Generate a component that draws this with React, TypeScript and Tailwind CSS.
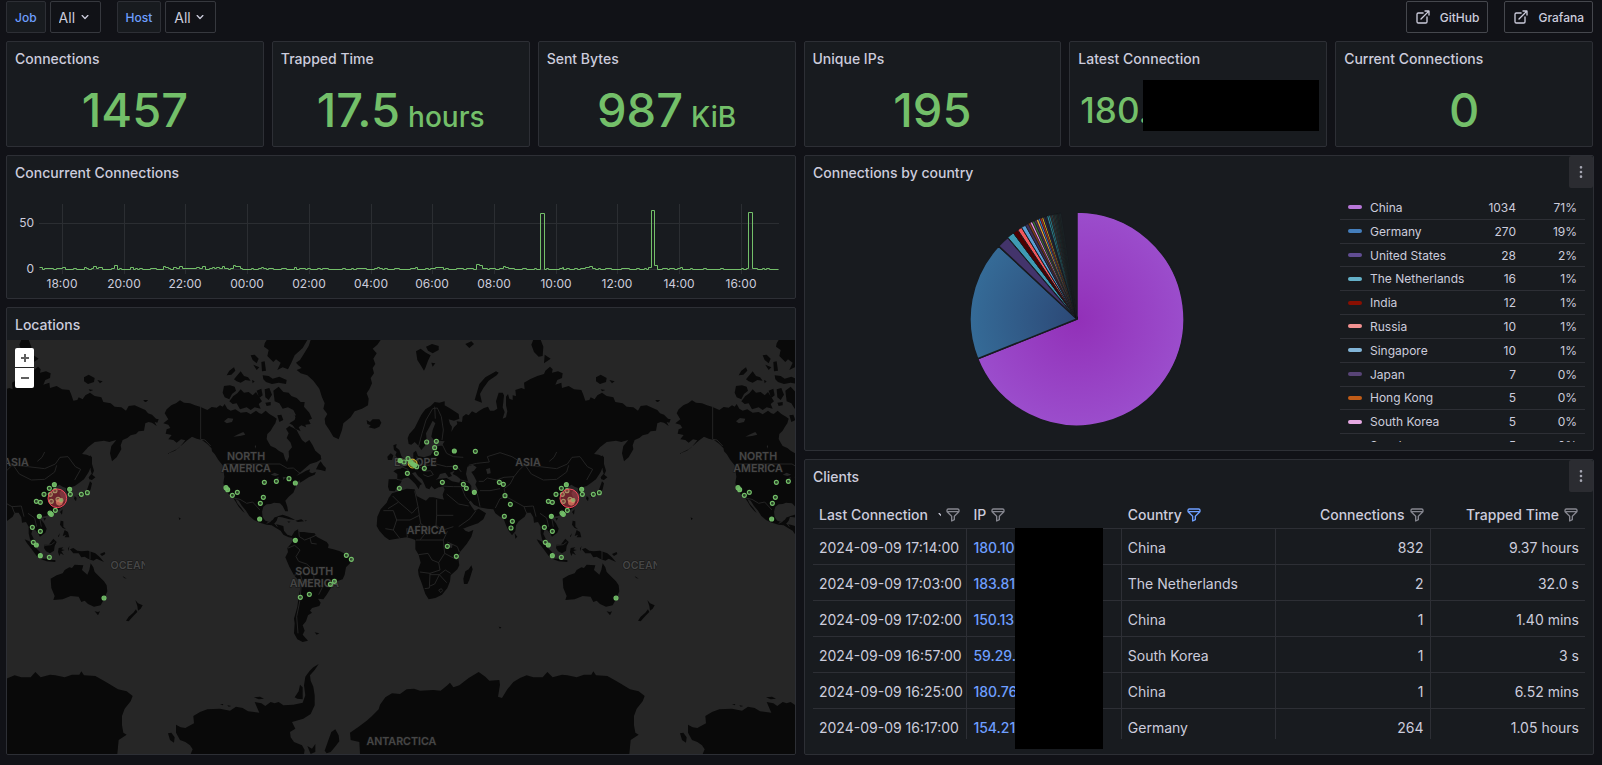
import { Fragment, type ReactNode } from "react";

const ICONS = {
  filter:
    "M19,2H5A3,3,0,0,0,2,5V6.17a3,3,0,0,0,.25,1.2l0,.06a2.81,2.81,0,0,0,.59.86L9,14.41V21a1,1,0,0,0,.47.85A1,1,0,0,0,10,22a1,1,0,0,0,.45-.11l4-2A1,1,0,0,0,15,19V14.41l6.12-6.12a2.81,2.81,0,0,0,.59-.86l0-.06A3,3,0,0,0,22,6.17V5A3,3,0,0,0,19,2ZM13.29,13.29A1,1,0,0,0,13,14v4.38l-2,1V14a1,1,0,0,0-.29-.71L5.41,8H18.59ZM20,6H4V5A1,1,0,0,1,5,4H19a1,1,0,0,1,1,1Z",
  external:
    "M18,10.82a1,1,0,0,0-1,1V19a1,1,0,0,1-1,1H5a1,1,0,0,1-1-1V8A1,1,0,0,1,5,7h7.18a1,1,0,0,0,0-2H5A3,3,0,0,0,2,8V19a3,3,0,0,0,3,3H16a3,3,0,0,0,3-3V11.82A1,1,0,0,0,18,10.82Zm3.92-8.2a1,1,0,0,0-.54-.54A1,1,0,0,0,21,2H15a1,1,0,0,0,0,2h3.59L8.29,14.29a1,1,0,0,0,0,1.42,1,1,0,0,0,1.42,0L20,5.41V9a1,1,0,0,0,2,0V3A1,1,0,0,0,21.92,2.62Z",
  angleDown:
    "M17,9.17a1,1,0,0,0-1.41,0L12,12.71,8.46,9.17a1,1,0,0,0-1.41,0,1,1,0,0,0,0,1.42l4.24,4.24a1,1,0,0,0,1.42,0L17,10.59A1,1,0,0,0,17,9.17Z",
  dots: "M12,7a2,2,0,1,0-2-2A2,2,0,0,0,12,7Zm0,10a2,2,0,1,0,2,2A2,2,0,0,0,12,17Zm0-7a2,2,0,1,0,2,2A2,2,0,0,0,12,10Z",
};

function Icon({ name, className }: { name: keyof typeof ICONS; className: string }) {
  return (
    <svg viewBox="0 0 24 24" fill="currentColor" className={className} aria-hidden="true">
      <path d={ICONS[name]} />
    </svg>
  );
}

function Variable({ id, label }: { id: string; label: string }) {
  return (
    <div className="flex gap-1">
      <label
        htmlFor={id}
        className="flex h-8 items-center rounded-[2px] border border-[#2d2f35] bg-[#181b1f] px-2 pt-0.5 text-xs font-medium text-[#6e9fff]"
      >
        {label}
      </label>
      <div className="relative">
        <select
          id={id}
          className="h-8 w-[51px] appearance-none rounded-[2px] border border-[#36383e] bg-[#111217] pt-0.5 pl-2 text-sm text-[#ccccdc]"
        >
          <option>All</option>
        </select>
        <Icon name="angleDown" className="pointer-events-none absolute top-2 right-2 size-4" />
      </div>
    </div>
  );
}

function DashLink({ label, href }: { label: string; href: string }) {
  return (
    <a
      href={href}
      className="flex h-8 items-center gap-[9px] rounded-[2px] border border-[#45474d] px-2 text-xs font-medium"
    >
      <Icon name="external" className="size-4" />
      <span className="pt-0.5">{label}</span>
    </a>
  );
}

function Panel({
  title,
  className = "",
  menu = false,
  children,
}: {
  title: string;
  className?: string;
  menu?: boolean;
  children: ReactNode;
}) {
  return (
    <section
      className={`relative flex min-w-0 flex-col overflow-hidden rounded-[2px] border border-[#2d2f35] bg-[#181b1f] ${className}`}
    >
      <header className="flex h-8 shrink-0 items-center justify-between pl-2">
        <h2 className="pt-0.5 text-sm font-medium">{title}</h2>
        {menu && (
          <button
            type="button"
            aria-label={`Menu for ${title}`}
            className="flex h-8 w-6 items-center justify-center rounded-[2px] bg-[#2b2c31] text-[#a5a6b2]"
          >
            <Icon name="dots" className="size-4" />
          </button>
        )}
      </header>
      {children}
    </section>
  );
}

const STATS = [
  { title: "Connections", value: "1457" },
  { title: "Trapped Time", value: "17.5", unit: "hours" },
  { title: "Sent Bytes", value: "987", unit: "KiB" },
  { title: "Unique IPs", value: "195" },
  { title: "Latest Connection", value: "180.", redacted: true },
  { title: "Current Connections", value: "0" },
];

function Stat({ title, value, unit, redacted }: (typeof STATS)[number]) {
  return (
    <Panel title={title} className="h-[106px]">
      {redacted ? (
        <div className="flex flex-1 items-center pl-[10px] text-[35px] leading-none font-medium text-[#73bf69]">
          {value}
          <div className="absolute top-[38px] right-[7px] bottom-[15px] left-[73px] bg-black" />
        </div>
      ) : (
        <div className="flex flex-1 items-baseline justify-center gap-2 pt-3 text-[47px] leading-none font-medium text-[#73bf69]">
          <span>{value}</span>
          {unit && <span className="text-[28px] leading-none">{unit}</span>}
        </div>
      )}
    </Panel>
  );
}

// Step samples as "position:level"; positions run 0-1568 across 800 px, levels are px above zero.
const SAMPLES =
  "77:2 83:0 87:1 103:0 109:1 122:2 128:0 144:1 148:0 164:2 168:1 173:0 178:1 183:3 189:1 193:2 199:0 218:1 223:4 229:0 234:1 238:0 254:2 260:0 264:1 268:0 273:1 279:0 294:1 305:0 320:3 324:2 330:1 334:0 340:2 344:1 350:3 356:1 385:2 390:1 395:3 401:0 410:1 415:2 420:1 424:2 430:1 435:3 440:1 446:0 450:1 456:4 461:3 471:1 475:0 491:1 495:0 506:1 511:2 516:1 521:0 526:1 536:0 551:1 561:0 577:2 581:0 587:1 597:0 601:1 607:0 622:1 627:0 632:1 642:0 671:1 677:0 687:1 692:0 697:1 718:0 733:1 738:2 743:1 748:0 753:1 758:0 773:1 783:0 803:1 813:2 818:0 833:1 838:0 843:1 853:2 868:0 873:1 879:0 893:1 908:0 914:1 928:0 933:5 939:4 944:1 954:0 959:1 970:0 979:1 985:3 990:2 995:1 1008:0 1024:1 1030:0 1046:1 1050:0 1059:56 1066:0 1070:1 1075:0 1095:1 1101:2 1104:0 1110:1 1116:0 1126:1 1130:0 1136:1 1146:2 1155:3 1161:1 1166:0 1172:1 1176:0 1186:1 1197:0 1217:1 1233:0 1247:1 1252:0 1262:1 1267:0 1271:2 1276:59 1281:4 1287:0 1297:1 1307:0 1312:1 1322:0 1326:1 1332:2 1337:0 1352:1 1357:0 1377:1 1383:0 1412:1 1418:0 1453:1 1457:0 1463:1 1467:57 1473:1 1483:0 1493:1 1497:0 1502:1 1507:0 1525:0";

const LINE = SAMPLES.split(" ")
  .map((pair, i) => {
    const [pos, level] = pair.split(":").map(Number);
    const x = Math.round(pos / 1.96) - 6.5;
    const y = 81.5 - level;
    return i === 0 ? `M${x},${y}` : `H${x}V${y}`;
  })
  .join("");

const HOURS = ["18:00", "20:00", "22:00", "00:00", "02:00", "04:00", "06:00", "08:00", "10:00", "12:00", "14:00", "16:00"];

function TimeSeries() {
  return (
    <svg viewBox="0 0 788 110" className="w-full flex-1" role="img" aria-label="Concurrent connections over time">
      <g stroke="#2b2e32" shapeRendering="crispEdges">
        <path d="M32,35.5H772M32,81.5H772" />
        {HOURS.map((h, i) => {
          const x = Math.round(55 + i * 61.7) + 0.5;
          return <path key={h} d={`M${x},16V86`} />;
        })}
      </g>
      <path d={LINE} fill="none" stroke="#73bf69" />
      <g fontSize="12" fill="#ccccdc">
        <text x="27" y="39" textAnchor="end">50</text>
        <text x="27" y="85" textAnchor="end">0</text>
        {HOURS.map((h, i) => (
          <text key={h} x={Math.round(55 + i * 61.7)} y="100" textAnchor="middle">
            {h}
          </text>
        ))}
      </g>
    </svg>
  );
}

// Americas and the Antarctic peninsula, in map units (one world is 1536 wide).
const WEST = [
  "M500,342 525,332 540,320 556,301 543,298 530,308 520,300 505,298 515,285 497,281 500,268 511,264 505,254 490,250 505,238 494,220 500,208 515,195 528,190 540,181 552,188 570,190 585,196 600,200 622,210 635,201 650,203 660,196 668,200 674,192 682,206 692,212 706,208 722,218 740,216 752,223 768,212 778,220 785,222 797,212 808,222 822,230 830,236 826,250 818,262 812,272 802,282 800,297 806,308 812,318 826,324 836,332 850,340 855,356 861,366 867,350 866,334 876,322 872,308 860,294 866,280 858,266 868,258 880,264 890,270 896,282 906,300 916,308 928,300 938,316 946,332 962,346 964,358 950,366 930,372 916,384 900,398 888,408 905,400 918,392 930,388 928,396 936,400 948,396 944,404 926,412 910,422 900,428 898,420 890,430 886,444 880,458 866,470 856,482 862,500 864,514 856,514 848,498 840,490 822,488 812,492 800,493 790,500 786,515 788,532 796,542 808,546 818,540 824,532 834,530 830,542 822,552 836,554 850,558 852,572 862,584 874,588 880,594 866,592 850,584 842,572 828,564 815,556 800,554 780,548 762,540 748,528 738,512 726,498 716,482 706,476 712,490 724,504 734,518 728,514 716,500 706,484 698,472 686,462 676,448 670,430 673,410 671,394 668,376 655,360 644,342 636,326 622,312 606,300 590,296 576,290 560,302 545,316 530,328Z",
  "M874,590 884,574 894,568 898,576 912,576 926,578 944,580 950,590 964,598 980,606 986,614 984,624 1000,628 1020,634 1040,644 1054,656 1050,670 1038,682 1034,704 1028,718 1010,724 998,732 990,748 980,764 970,778 954,776 962,788 958,798 936,804 930,812 936,818 924,826 918,844 908,856 914,872 908,884 924,902 908,906 892,898 882,880 884,850 882,836 892,800 896,770 902,740 898,724 882,706 868,680 856,652 864,636 862,624 872,612 880,600Z",
  "M888,68 900,60 910,44 926,18 932,0 1142,0 1132,14 1118,26 1130,40 1120,56 1126,72 1118,84 1122,100 1112,114 1116,130 1108,148 1100,160 1106,176 1104,196 1086,206 1064,214 1052,232 1030,250 1026,270 1016,298 1000,290 988,270 976,252 974,236 982,222 970,206 974,190 966,172 958,146 940,122 922,106 902,100 890,90 905,84 895,76Z",
  "M794,10 800,0 922,0 908,24 884,46 874,68 864,88 848,82 832,90 842,68 828,58 820,66 802,48 806,30 792,20Z",
  "M788,106 806,108 818,116 838,110 860,120 858,132 836,128 816,132 798,126 790,118Z",
  "M820,152 836,140 850,156 866,158 874,168 890,174 902,186 914,186 912,200 928,218 936,236 926,240 932,252 916,254 918,262 904,256 896,262 902,274 886,266 878,256 868,250 884,240 888,226 880,210 864,202 848,206 838,190 824,184Z",
  "M688,184 700,168 712,160 722,148 732,158 746,156 758,166 768,156 778,172 786,184 776,192 782,206 764,202 752,210 740,202 720,208 710,190 698,192Z",
  "M672,138 690,136 704,140 708,152 696,162 688,178 674,172 668,158Z M702,118 712,106 722,94 732,108 744,112 752,122 736,120 722,128 710,124Z M680,106 688,92 702,82 706,92 694,104Z M752,46 764,44 776,56 770,70 758,60Z M784,66 794,64 798,92 786,94Z M760,74 778,82 770,90Z M756,120 764,124 758,130Z M794,148 808,144 816,164 806,180 796,172Z M770,152 784,146 788,166 778,174Z M796,188 812,186 812,196 800,198Z M832,226 844,224 850,240 838,246Z M884,226 892,228 888,236Z",
  "M948,388 956,372 962,364 970,376 978,384 976,394 962,390Z M634,322 644,332 646,344 636,334Z",
  "M828,530 848,524 866,530 886,540 868,538 846,532Z M886,542 904,538 912,544 894,546Z M862,544 872,545 866,548Z M914,541 922,542 916,544Z M536,532 542,536 538,540Z M944,877 958,880 950,884Z M430,180 444,180 436,186Z",
  "M1100,240 1110,246 1118,238 1138,238 1144,248 1138,260 1124,266 1106,262 1112,256 1102,252Z",
  "M528,1154 542,1162 556,1164 582,1150 580,1128 600,1116 622,1108 660,1106 690,1112 708,1100 728,1104 744,1114 778,1118 764,1086 784,1090 796,1098 812,1086 824,1090 836,1086 850,1096 880,1094 908,1088 916,1066 912,1036 916,1010 928,994 940,982 956,972 944,990 930,1006 932,1022 940,1040 944,1066 944,1096 932,1122 910,1136 876,1146 886,1166 870,1176 872,1192 882,1206 906,1216 914,1230 912,1242 572,1242 578,1228 570,1216 556,1206 540,1200 528,1178Z",
  "M504,1180 514,1178 524,1192 522,1208 510,1200Z M974,1232 984,1204 994,1176 1006,1168 1016,1186 1018,1204 1004,1222 992,1236 980,1240Z M922,1218 936,1226 946,1212 946,1236 932,1242Z M884,1072 896,1054 900,1034 908,1042 908,1078 892,1076Z M762,1072 780,1070 792,1076 776,1078Z M660,1092 670,1092 668,1096Z M682,1096 694,1098 686,1100Z",
];

// Europe, Africa, Asia and Oceania, in map units offset by 1200.
const EAST = [
  "M26,312 23,294 28,282 44,264 54,244 64,224 76,208 92,198 104,186 118,188 134,184 134,196 152,206 176,222 178,236 162,242 146,238 150,252 156,260 154,276 162,262 172,252 170,244 186,246 188,230 198,222 206,226 216,214 228,220 238,212 252,204 264,200 270,212 282,212 292,206 288,184 296,158 308,158 312,166 310,186 308,202 314,216 308,236 318,232 322,214 318,196 318,170 324,162 328,176 338,180 338,166 348,168 346,150 364,144 374,148 372,128 390,118 412,108 432,102 436,92 450,80 458,88 456,98 474,94 488,100 486,114 472,120 466,134 484,128 486,144 506,138 522,148 544,150 550,164 556,182 568,180 572,172 584,178 592,166 606,158 620,168 640,172 646,186 668,190 680,200 700,202 714,212 722,198 740,196 758,204 772,210 780,220 792,224 804,236 812,238 808,248 800,246 806,258 792,248 782,246 772,250 768,272 752,274 744,282 728,286 718,294 704,300 698,316 700,328 686,352 672,364 666,340 670,318 682,304 690,290 706,278 690,290 684,300 664,306 648,302 620,306 600,322 582,342 596,344 610,350 612,372 602,396 588,418 572,430 560,438 548,442 546,450 552,462 542,468 534,452 534,444 524,440 514,434 504,440 500,446 512,448 520,450 514,460 518,470 530,480 532,490 522,502 508,512 490,522 474,528 462,530 458,538 468,550 476,566 472,578 456,590 450,580 442,570 434,566 430,582 438,598 444,606 448,620 436,612 426,598 422,580 422,560 414,546 402,548 400,532 392,518 380,518 374,530 356,544 348,556 346,574 336,586 326,572 318,556 310,534 300,530 286,520 280,508 262,506 238,502 222,494 212,482 206,486 216,502 224,512 236,506 258,520 250,538 234,550 204,560 180,570 174,556 162,534 148,512 138,490 130,474 128,464 134,448 130,440 116,442 104,448 96,440 90,426 104,420 120,416 140,414 156,424 178,428 182,418 170,408 158,402 164,392 150,398 156,408 146,412 136,398 120,402 114,414 100,424 94,426 96,436 88,448 78,444 72,430 66,418 54,408 46,396 36,400 46,412 56,422 66,432 60,436 56,448 46,432 34,420 24,412 8,416 2,430 -10,444 -16,454 -32,452 -36,440 -34,418 -8,418 -8,402 -20,394 -10,388 2,386 12,378 24,364 40,356 40,338 48,332 54,348 72,352 92,346 100,332 108,320 126,316 134,304 118,302 104,304 94,290 98,270 106,250 98,242 88,262 78,280 80,300 76,316 64,330 56,318 44,306 34,314Z",
  "M224,180 230,160 238,132 256,112 288,94 296,98 290,106 266,122 250,144 240,162 246,188Z M48,34 62,26 78,38 92,46 84,62 76,84 72,92 62,76 52,60Z M78,20 96,12 116,18 116,30 98,40 84,32Z M94,68 106,70 98,80Z M196,12 214,4 222,12 208,24Z M394,14 402,-6 420,-6 430,20 428,48 416,50 402,36Z M434,44 452,56 432,70Z M588,112 602,104 620,114 618,126 600,132 588,124Z M628,120 644,124 636,130Z M602,148 616,150 606,154Z M766,182 780,180 774,186Z M726,282 730,284 728,286Z",
  "M-20,316 -10,312 -12,322 -2,330 4,348 10,356 4,364 -16,366 -8,354 -14,346 -10,336 -18,330Z M-38,350 -28,340 -20,346 -24,360 -36,360Z",
  "M606,346 612,352 612,372 618,392 612,406 608,390Z M602,412 610,402 622,412 612,420 604,418Z M606,424 612,430 608,448 600,462 582,466 568,468 580,458 596,452Z M560,468 566,474 564,484 558,476Z M572,468 582,468 574,474Z",
  "M524,508 522,524 516,516Z M466,534 474,534 470,542Z M518,542 526,544 526,560 534,568 524,564 516,554Z M530,570 540,576 544,592 530,592 534,584 524,588Z M510,588 516,580 512,592Z",
  "M410,598 424,604 440,620 456,636 458,654 446,648 430,626 416,608Z M456,656 474,656 486,660 502,660 502,666 476,664Z M470,614 482,614 496,596 506,606 500,618 498,632 486,640 474,634 468,624Z M512,624 526,622 520,628 530,630 520,634 528,646 518,640 514,648 510,636Z M546,628 556,624 568,632 580,634 600,632 622,640 634,650 648,666 626,656 616,662 600,656 590,650 580,652 572,640 556,640Z M636,642 650,636 652,642 642,648Z M540,626 544,618 542,634Z",
  "M488,716 506,706 524,700 530,690 544,682 552,684 560,674 586,676 582,690 598,704 604,690 608,670 616,682 620,696 632,708 648,724 656,736 658,754 648,778 638,796 618,800 600,792 590,782 580,786 572,770 548,768 524,778 496,780 500,768 490,744Z M620,814 630,816 636,814 630,826Z",
  "M742,780 750,790 764,796 758,806 750,812 748,798Z M744,808 748,816 736,828 722,844 714,842 722,830 736,818Z M704,708 716,716 708,714Z",
  "M214,676 218,688 208,720 202,732 192,732 190,716 196,694 206,688Z M344,580 352,590 346,596Z M296,860 304,862 300,866Z M874,533 878,536 874,538Z",
  "M-24,460 -4,454 20,446 44,448 50,468 66,476 78,482 88,472 100,472 118,476 138,480 150,506 162,526 178,552 196,572 206,576 220,570 214,590 200,612 180,636 174,650 178,676 172,688 152,706 150,724 142,744 126,764 106,774 86,778 76,762 66,732 56,706 54,690 62,668 56,644 46,628 46,600 36,596 20,592 -10,596 -32,600 -46,590 -62,572 -70,558 -68,530 -58,508 -40,488 -34,474Z",
  "M-120,1242 -122,1206 -148,1200 -150,1178 -124,1160 -100,1142 -84,1128 -64,1108 -60,1094 -44,1072 -24,1060 0,1062 20,1048 42,1046 60,1052 100,1050 122,1052 142,1036 150,1028 160,1042 178,1036 206,1014 236,996 256,1010 268,1022 298,1020 300,1034 294,1070 306,1074 322,1048 340,1026 360,1014 380,1006 400,1012 428,1012 442,996 458,1012 486,1004 502,1006 530,1012 552,1004 574,1004 580,994 588,1006 622,1008 650,1024 664,1032 690,1048 716,1054 734,1068 728,1084 710,1106 702,1128 702,1156 706,1178 716,1184 692,1200 688,1242Z",
];

const WEST_BORDERS =
  "M602,200V298L615,300 632,318 M674,372H840L862,385 880,384 900,400 M700,474 720,478 740,490 758,486 780,510 M800,550 812,544 M826,552 832,560 M896,570 898,590 914,600 930,594 948,586 M930,594 934,610 950,612 M864,624 884,616 900,630 888,650 896,664 920,672 940,690 942,716 950,730 968,740 956,764 M882,706 900,700 908,726 M904,730 900,780 890,830 894,880 M908,726 930,724 942,716";

const EAST_BORDERS =
  "M56,318 66,280 78,240 98,206 112,204 M112,204 124,230 130,270 126,300 M104,200 106,236 M128,316 140,340 160,350 190,352 M50,350 60,372 84,376 104,372 108,352 M4,380 24,388 30,404 M-10,418 20,424 M60,380 70,394 92,392 100,404 84,410 70,404 M108,372 140,380 170,378 184,396 M182,420 200,424 212,430 M124,438 160,440 184,440 M206,376 230,370 268,366 262,350 300,338 336,350 374,374 356,392 342,410 312,412 290,420 262,414 250,424 236,424 M374,374 420,380 470,386 502,372 516,352 540,350 562,380 578,388 560,420 M376,376 394,402 430,420 470,418 500,396 506,376 M448,364 462,352 470,336 M342,410 330,432 312,446 318,470 340,482 372,500 400,498 M318,470 300,476 286,504 M240,452 270,452 300,446 M232,462 240,500 M184,440 196,470 208,484 M140,462 176,492 206,498 M176,560 210,536 228,512 M372,500 380,520 M400,498 408,530 M420,520 440,534 446,560 M454,528 460,560 M606,632V658 M470,616 490,614 500,606 M-22,468 -4,486 -36,506 M-4,486 36,520 54,500 44,452 M54,500 58,526 M110,478V526H160 M110,526 108,556 M58,526 30,540 -10,540 -20,512 -50,512 M-10,540 -20,570 -44,566 M58,526 62,550 44,572 20,566 M-20,570 0,596 M20,566 22,592 M62,550 84,570 108,556 130,570 160,560 M84,570 60,600 48,600 M60,600 90,600 130,600 142,574 M130,600 134,640 116,668 96,660 84,640 56,644 M134,640 172,660 M142,606 172,620 178,636 M116,668 120,690 90,700 60,696 M90,700 88,744 74,746 M90,704 118,704 136,690 152,700 M118,704 104,732 90,738 M118,704 140,728 M116,750 124,746 128,752 122,758Z";

const WEST_DOTS: [number, number, number?][] = [
  [678, 443, 1], [683, 449, 1], [697, 466], [712, 457], [793, 427], [829, 424], [867, 416], [886, 429, 1],
  [790, 472], [781, 490], [779, 537, 1], [886, 601, 1], [1039, 646], [1054, 658], [1003, 724], [991, 733],
  [928, 763], [901, 772],
];

const EAST_DOTS: [number, number, number?][] = [
  [0, 362, 1], [12, 366], [24, 356], [32, 366, 1], [38, 372, 1], [44, 376, 1], [50, 380], [22, 400], [-2, 445],
  [73, 385], [80, 306], [109, 304], [104, 323], [109, 340], [163, 333, 1], [226, 334], [166, 382], [127, 427],
  [190, 433], [199, 445], [223, 457, 1], [298, 427], [310, 433], [315, 467], [331, 493], [313, 529], [337, 544],
  [333, 564], [142, 619], [169, 649], [499, 434, 1], [484, 445], [501, 452], [468, 463], [487, 463],
  [545, 448, 1], [547, 463], [580, 463], [598, 458], [445, 484], [457, 487], [490, 484], [502, 511],
  [486, 519, 1], [490, 523, 1], [454, 529, 1], [433, 562], [457, 574], [436, 607], [445, 615, 1],
  [457, 647, 1], [484, 652], [648, 774, 1], [510, 478], [519, 481, 1],
];

const LABELS: [string, number, number][] = [
  ["NORTH", 738, 361], ["AMERICA", 738, 397], ["SOUTH", 943, 706], ["AMERICA", 943, 742],
  ["EUROPE", 1246, 379], ["ASIA", 1584, 379], ["AFRICA", 1279, 583], ["ANTARCTICA", 1204, 1214],
  ["OCEAN", 1925, 688],
];

function Dots({ points }: { points: [number, number, number?][] }) {
  return (
    <>
      {points.map(([x, y, solid], i) => (
        <circle key={i} cx={x} cy={y} r="6" fill="#73bf69" fillOpacity={solid ? 0.9 : 0.3} stroke="#73bf69" strokeWidth="3.4" />
      ))}
    </>
  );
}

function WorldMap() {
  return (
    <svg
      viewBox="21 0 2364 1242"
      preserveAspectRatio="xMidYMid slice"
      className="absolute inset-0 size-full"
      role="img"
      aria-label="World map of client locations"
    >
      <defs>
        <clipPath id="tile-edge">
          <rect x="-65" y="-40" width="111" height="60" />
        </clipPath>
      </defs>
      <rect x="0" y="-200" width="2400" height="1700" fill="#262626" />
      {[-1536, 0, 1536].map((shift) => (
        <Fragment key={shift}>
          <g transform={`translate(${shift} 0)`}>
            <g fill="#090909">
              <path d={WEST.join(" ")} />
              <path d={EAST.join(" ")} transform="translate(1200 0)" />
            </g>
            <g fill="#262626">
              <path d="M672,244 684,234 700,236 696,246 680,250Z M700,290 716,282 730,276 736,284 720,288Z M764,318 768,316 768,326Z M812,404 824,398 838,404 826,408Z M830,414 836,410 834,424Z M848,410 858,412 850,420Z M868,222 878,218 882,232 874,238Z" />
              <g transform="translate(1200 0)">
                <path d="M202,380 218,374 230,382 222,392 214,396 222,408 230,424 226,434 234,450 226,458 214,454 214,438 204,424 198,402Z M258,388 270,384 272,400 262,402Z" />
                <path d="M146,612 158,612 156,624 148,622Z M120,316 128,312 130,318Z" />
              </g>
            </g>
            <g fill="none" stroke="#292929" strokeWidth="2.6" strokeLinejoin="round">
              <path d={WEST_BORDERS} />
              <path d={EAST_BORDERS} transform="translate(1200 0)" />
            </g>
            <g fontSize="32" fontWeight="600" fill="#464646" textAnchor="middle" stroke="#151515" strokeWidth="3" paintOrder="stroke">
              {LABELS.filter(([, x]) => x + shift > 21 && x + shift < 2385).map(([text, x, y]) => (
                <g key={`${text}-${y}`} transform={`translate(${x} ${y})`} clipPath={text === "OCEAN" ? "url(#tile-edge)" : undefined}>
                  <text>{text}</text>
                </g>
              ))}
            </g>
            <Dots points={WEST_DOTS} />
            <g transform="translate(1200 0)">
              <circle cx="38" cy="371" r="13" fill="#fade2a" fillOpacity="0.3" stroke="#c9b22a" strokeWidth="3" />
              <Dots points={EAST_DOTS} />
              <circle cx="514" cy="487" r="10" fill="#e0b070" fillOpacity="0.7" />
              <circle cx="508" cy="475" r="28" fill="#f2495c" fillOpacity="0.42" stroke="#f2495c" strokeWidth="3" />
              <circle cx="519" cy="481" r="5" fill="#73bf69" fillOpacity="0.7" />
            </g>
          </g>
        </Fragment>
      ))}
    </svg>
  );
}

const LEGEND = [
  { name: "China", value: 1034, pct: "71%", swatch: "bg-[#b877d9]" },
  { name: "Germany", value: 270, pct: "19%", swatch: "bg-[#447ebc]" },
  { name: "United States", value: 28, pct: "2%", swatch: "bg-[#614d93]" },
  { name: "The Netherlands", value: 16, pct: "1%", swatch: "bg-[#64b0c8]" },
  { name: "India", value: 12, pct: "1%", swatch: "bg-[#890f02]" },
  { name: "Russia", value: 10, pct: "1%", swatch: "bg-[#f29191]" },
  { name: "Singapore", value: 10, pct: "1%", swatch: "bg-[#82b5d8]" },
  { name: "Japan", value: 7, pct: "0%", swatch: "bg-[#584477]" },
  { name: "Hong Kong", value: 5, pct: "0%", swatch: "bg-[#c15c17]" },
  { name: "South Korea", value: 5, pct: "0%", swatch: "bg-[#e5a8e2]" },
  { name: "Sweden", value: 5, pct: "0%", swatch: "bg-[#3f6833]" },
];

const SLICES: [number, string][] = [
  [1034, "url(#pie-purple)"], [270, "url(#pie-blue)"], [28, "#43346b"], [16, "#3f9bb3"], [12, "#4d0000"],
  [10, "#f2575c"], [10, "#5a9fd4"], [7, "#3b2d58"], [5, "#8a4212"], [5, "#e88ee0"], [5, "#3f7434"],
  [5, "#4a2f63"], [5, "#f2ab3c"], [4, "#3d8ae8"], [4, "#d42c22"], [4, "#e0b41f"], [4, "#2c2c55"],
  [4, "#22283a"], [4, "#35a0b0"], [4, "#2f8a97"], [3, "#5a4238"], [3, "#2a5b64"], [3, "#4a3636"],
  [3, "#27473f"], [3, "#27373a"], [3, "#2c2a2a"], [3, "#22302e"], [3, "#1f2a2e"],
];

function Pie() {
  const total = 1500;
  const r = 107;
  let acc = 0;
  const point = (n: number) => {
    const a = (n / total) * 2 * Math.PI;
    return `${(r * Math.sin(a)).toFixed(2)},${(-r * Math.cos(a)).toFixed(2)}`;
  };
  return (
    <svg viewBox="-107 -107 214 214" className="size-[214px]" role="img" aria-label="Connections by country">
      <defs>
        <radialGradient id="pie-purple" gradientUnits="userSpaceOnUse" cx="0" cy="0" r="107">
          <stop offset="0" stopColor="#9230b8" />
          <stop offset="1" stopColor="#9b4dcc" />
        </radialGradient>
        <radialGradient id="pie-blue" gradientUnits="userSpaceOnUse" cx="0" cy="0" r="107">
          <stop offset="0" stopColor="#2c4876" />
          <stop offset="1" stopColor="#356b97" />
        </radialGradient>
      </defs>
      {SLICES.map(([n, fill], i) => {
        const from = point(acc);
        const to = point(acc + n);
        acc += n;
        return (
          <path
            key={i}
            d={`M0,0L${from}A${r},${r},0,${n > total / 2 ? 1 : 0},1,${to}Z`}
            fill={fill}
            stroke="#181b1f"
            strokeWidth={n > 20 ? 1.5 : n > 9 ? 1 : 0.6}
            strokeLinejoin="round"
          />
        );
      })}
    </svg>
  );
}

const CLIENTS = [
  ["2024-09-09 17:14:00", "180.10", "China", "832", "9.37 hours"],
  ["2024-09-09 17:03:00", "183.81", "The Netherlands", "2", "32.0 s"],
  ["2024-09-09 17:02:00", "150.13", "China", "1", "1.40 mins"],
  ["2024-09-09 16:57:00", "59.29.", "South Korea", "1", "3 s"],
  ["2024-09-09 16:25:00", "180.76", "China", "1", "6.52 mins"],
  ["2024-09-09 16:17:00", "154.21", "Germany", "264", "1.05 hours"],
];

const COLUMNS = ["Last Connection", "IP", "Country", "Connections", "Trapped Time"];

function ClientsTable() {
  return (
    <div className="mx-2 h-[247px] overflow-hidden">
      <table className="w-full table-fixed border-separate border-spacing-0 text-sm">
        <thead>
          <tr>
            {COLUMNS.map((name, i) => (
              <th key={name} className="h-[37px] border-b border-[#2d2f35] px-[6px] pt-[10px] font-medium">
                <div className={`flex items-center gap-1 ${i > 2 ? "justify-end" : ""}`}>
                  <span className="whitespace-nowrap">{name}</span>
                  {i === 0 && (
                    <span className="flex w-[9px] shrink-0 justify-start overflow-hidden pl-0.5">
                      <Icon name="angleDown" className="size-4 shrink-0" />
                    </span>
                  )}
                  <button type="button" aria-label={`Filter ${name}`} className="shrink-0">
                    <Icon name="filter" className={i === 2 ? "size-4 text-[#6e9fff]" : "size-4 text-[#85868f]"} />
                  </button>
                </div>
              </th>
            ))}
          </tr>
        </thead>
        <tbody>
          {CLIENTS.map((row) => (
            <tr key={row[0]}>
              {row.map((cell, i) => (
                <td
                  key={i}
                  className={`h-9 border-b border-[#2d2f35] px-[6px] pt-[3px] whitespace-nowrap ${i < 4 ? "border-r" : ""} ${i > 2 ? "text-right" : ""}`}
                >
                  {i === 1 ? (
                    <a href="#clients" className="font-medium text-[#6e9fff]">
                      {cell}
                    </a>
                  ) : (
                    cell
                  )}
                </td>
              ))}
            </tr>
          ))}
        </tbody>
      </table>
      <div className="absolute top-[68px] bottom-[5px] left-[210px] w-[88px] bg-black" />
    </div>
  );
}

export default function App() {
  return (
    <main className="flex min-h-screen flex-col gap-2 bg-[#111217] pt-px pr-2 pb-[10px] pl-[6px] font-['Inter',sans-serif] text-[#ccccdc]">
      <nav className="flex items-center justify-between pr-px">
        <div className="flex gap-4">
          <Variable id="var-job" label="Job" />
          <Variable id="var-host" label="Host" />
        </div>
        <div className="flex gap-4">
          <DashLink label="GitHub" href="#github" />
          <DashLink label="Grafana" href="#grafana" />
        </div>
      </nav>

      <div className="grid grid-cols-6 gap-2 pr-px">
        {STATS.map((s) => (
          <Stat key={s.title} {...s} />
        ))}
      </div>

      <div className="grid flex-1 grid-cols-2 gap-2">
        <div className="flex min-w-0 flex-col gap-2">
          <Panel title="Concurrent Connections" className="h-[144px]">
            <TimeSeries />
          </Panel>
          <Panel title="Locations" className="min-h-[448px] flex-1">
            <div className="relative flex-1">
              <WorldMap />
              <div className="absolute top-2 left-2 flex flex-col gap-px text-[#5f5f5f]">
                <button type="button" aria-label="Zoom in" className="flex h-[19px] w-[19px] items-center justify-center rounded-t-[2px] bg-white">
                  <svg viewBox="0 0 8 8" className="size-2" stroke="currentColor" strokeWidth="2"><path d="M0,4H8M4,0V8" /></svg>
                </button>
                <button type="button" aria-label="Zoom out" className="flex h-5 w-[19px] items-center justify-center rounded-b-[2px] bg-white">
                  <svg viewBox="0 0 8 8" className="size-2" stroke="currentColor" strokeWidth="2"><path d="M0,4H8" /></svg>
                </button>
              </div>
            </div>
          </Panel>
        </div>

        <div className="flex min-w-0 flex-col gap-2">
          <Panel title="Connections by country" className="h-[296px]" menu>
            <div className="flex min-h-0 flex-1 px-2 pt-2 pb-2">
              <div className="flex flex-1 items-center justify-center">
                <Pie />
              </div>
              <div className="w-[245px] overflow-hidden">
                <table className="h-[262px] w-full border-separate border-spacing-0 text-xs">
                  <tbody>
                    {LEGEND.map((c) => (
                      <tr key={c.name}>
                        <td className="w-[30px] border-b border-[#2d2f35] pl-2">
                          <div className={`h-1 w-[14px] rounded-full ${c.swatch}`} />
                        </td>
                        <td className="border-b border-[#2d2f35] pt-px">{c.name}</td>
                        <td className="border-b border-[#2d2f35] pt-px text-right">{c.value}</td>
                        <td className="w-[69px] border-b border-[#2d2f35] pt-px pr-2 text-right">{c.pct}</td>
                      </tr>
                    ))}
                  </tbody>
                </table>
              </div>
            </div>
          </Panel>
          <Panel title="Clients" className="min-h-[296px] flex-1" menu>
            <ClientsTable />
          </Panel>
        </div>
      </div>
    </main>
  );
}
